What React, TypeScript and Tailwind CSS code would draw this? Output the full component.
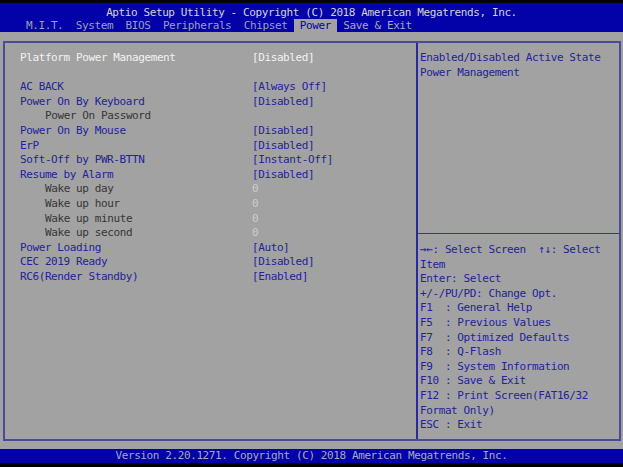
import React from "react";

type Row = {
  label: string;
  value?: string;
  kind: "sel" | "item" | "sub" | "blank";
};

const rows: Row[] = [
  { label: "Platform Power Management", value: "[Disabled]", kind: "sel" },
  { label: "", kind: "blank" },
  { label: "AC BACK", value: "[Always Off]", kind: "item" },
  { label: "Power On By Keyboard", value: "[Disabled]", kind: "item" },
  { label: "Power On Password", kind: "sub" },
  { label: "Power On By Mouse", value: "[Disabled]", kind: "item" },
  { label: "ErP", value: "[Disabled]", kind: "item" },
  { label: "Soft-Off by PWR-BTTN", value: "[Instant-Off]", kind: "item" },
  { label: "Resume by Alarm", value: "[Disabled]", kind: "item" },
  { label: "Wake up day", value: "0", kind: "sub" },
  { label: "Wake up hour", value: "0", kind: "sub" },
  { label: "Wake up minute", value: "0", kind: "sub" },
  { label: "Wake up second", value: "0", kind: "sub" },
  { label: "Power Loading", value: "[Auto]", kind: "item" },
  { label: "CEC 2019 Ready", value: "[Disabled]", kind: "item" },
  { label: "RC6(Render Standby)", value: "[Enabled]", kind: "item" },
];

const keys = [
  "→←: Select Screen  ↑↓: Select",
  "Item",
  "Enter: Select",
  "+/-/PU/PD: Change Opt.",
  "F1  : General Help",
  "F5  : Previous Values",
  "F7  : Optimized Defaults",
  "F8  : Q-Flash",
  "F9  : System Information",
  "F10 : Save & Exit",
  "F12 : Print Screen(FAT16/32",
  "Format Only)",
  "ESC : Exit",
];

const labelColor = {
  sel: "text-[#f2f2f2]",
  item: "text-[#22229c]",
  sub: "text-[#363636] pl-[25px]",
  blank: "",
};
const valueColor = {
  sel: "text-[#f2f2f2]",
  item: "text-[#22229c]",
  sub: "text-[#cdcdcd]",
  blank: "",
};

export default function App() {
  return (
    <div
      className="w-[623px] h-[467px] flex flex-col bg-black text-[11px] tracking-[-0.4px] leading-[14.6px] whitespace-pre"
      style={{ fontFamily: '"DejaVu Sans Mono", "Liberation Mono", monospace' }}
    >
      {/* header */}
      <div className="mt-[3px] h-[29px] bg-[#0202a8] flex flex-col">
        <div className="h-[16px] pt-[4px] text-center text-[#d4d4d8] leading-[12px]">
          Aptio Setup Utility - Copyright (C) 2018 American Megatrends, Inc.
        </div>
        <div className="flex h-[13px] pl-[26px] text-[#9e9ebe] leading-[13px]">
          <span>M.I.T.  System  BIOS  Peripherals  Chipset </span>
          <span className="bg-[#a2a2a2] text-[#0202a8]"> Power </span>
          <span className="text-[#a8a8c0]"> Save &amp; Exit</span>
        </div>
      </div>

      {/* body */}
      <div className="flex-1 bg-[#a2a2a2] pt-[9px] pb-[8px] pl-[3px] pr-[2px]">
        <div className="h-full border-2 border-[#4a4a98] flex">
          <div className="w-[411px] pt-[8px] pl-[15px]">
            {rows.map((r, i) => (
              <div key={i} className="flex h-[14.6px]">
                <div className={"w-[232px] " + labelColor[r.kind]}>{r.label}</div>
                <div className={valueColor[r.kind]}>{r.value ?? ""}</div>
              </div>
            ))}
          </div>
          <div className="flex-1 border-l-2 border-[#2a2aa0] flex flex-col text-[#22229c]">
            <div className="h-[190px] pt-[8px] pl-[2px]">
              <div>Enabled/Disabled Active State</div>
              <div>Power Management</div>
            </div>
            <div className="h-px bg-[#3434a4]" />
            <div className="pt-[9px] pl-[2px]">
              {keys.map((k, i) => (
                <div key={i} className="h-[14.6px]">{k}</div>
              ))}
            </div>
          </div>
        </div>
      </div>

      {/* footer */}
      <div className="h-[14px] bg-[#0202a8] text-center text-[#a8a8bc] leading-[14px]">
        Version 2.20.1271. Copyright (C) 2018 American Megatrends, Inc.
      </div>
      <div className="h-[4px] bg-black" />
    </div>
  );
}
